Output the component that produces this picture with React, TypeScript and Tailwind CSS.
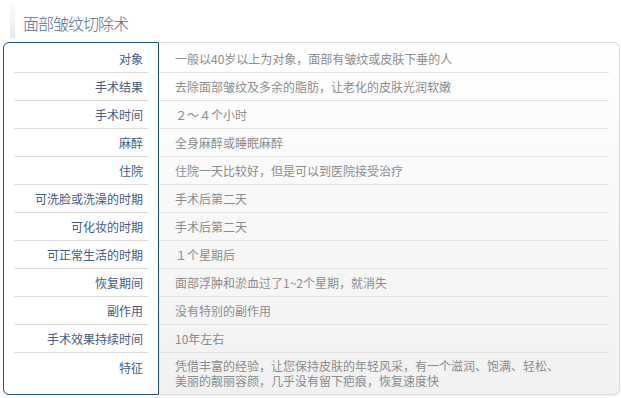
const font = { fontFamily: '"Noto Sans CJK SC", "Noto Sans", sans-serif' }

const rows: [string, string[]][] = [
  ['对象', ['一般以40岁以上为对象，面部有皱纹或皮肤下垂的人']],
  ['手术结果', ['去除面部皱纹及多余的脂肪，让老化的皮肤光润软嫩']],
  ['手术时间', ['２～４个小时']],
  ['麻醉', ['全身麻醉或睡眠麻醉']],
  ['住院', ['住院一天比较好，但是可以到医院接受治疗']],
  ['可洗脸或洗澡的时期', ['手术后第二天']],
  ['可化妆的时期', ['手术后第二天']],
  ['可正常生活的时期', ['１个星期后']],
  ['恢复期间', ['面部浮肿和淤血过了1~2个星期，就消失']],
  ['副作用', ['没有特别的副作用']],
  ['手术效果持续时间', ['10年左右']],
  ['特征', ['凭借丰富的经验，让您保持皮肤的年轻风采，有一个滋润、饱满、轻松、', '美丽的靓丽容颜，几乎没有留下疤痕，恢复速度快']],
]

export default function App() {
  return (
    <div className="w-[621px] h-[398px] bg-white overflow-hidden" style={font}>
      {/* title */}
      <div className="flex items-end h-[42px] pl-[10px] pb-[9px]">
        <div className="w-[5px] h-[38px] bg-gradient-to-b from-white to-[#e6e8ee] mr-[8px] -mb-[5px]" />
        <h1 className="text-[16px] leading-[20px] tracking-[-1px] text-[#5b6d8f] font-light">面部皱纹切除术</h1>
      </div>

      <div className="flex ml-[3px] w-[617px] h-[353px]">
        <div className="w-[156px] border border-[#1f4a8c] rounded-l-[6px] bg-white pt-[2px] px-[10px] shrink-0">
          {rows.map(([label], i) => (
            <div
              key={label}
              className={`flex justify-end pr-[5px] text-[12px] font-normal text-[#455b80] ${i < rows.length - 1 ? 'h-[28px] items-center border-b border-[#dedede]' : 'pt-[6px]'}`}
            >
              {label}
            </div>
          ))}
        </div>
        <div className="flex-1 border-y border-r border-[#dcdcdc] rounded-r-[6px] bg-gradient-to-b from-white to-[#f1f1f1] pt-[2px] pr-[10px] shadow-[0_1px_2px_rgba(0,0,0,0.08)]">
          {rows.map(([label, val], i) => (
            <div
              key={label}
              className={`pl-[16px] text-[12px] text-[#8c8c8c] ${i < rows.length - 1 ? 'h-[28px] flex items-center border-b border-[#e2e2e2]' : 'pt-[5px] leading-[15px]'}`}
            >
              {val.length > 1 ? (
                <div>{val.map(v => <div key={v}>{v}</div>)}</div>
              ) : val[0]}
            </div>
          ))}
        </div>
      </div>
    </div>
  )
}
